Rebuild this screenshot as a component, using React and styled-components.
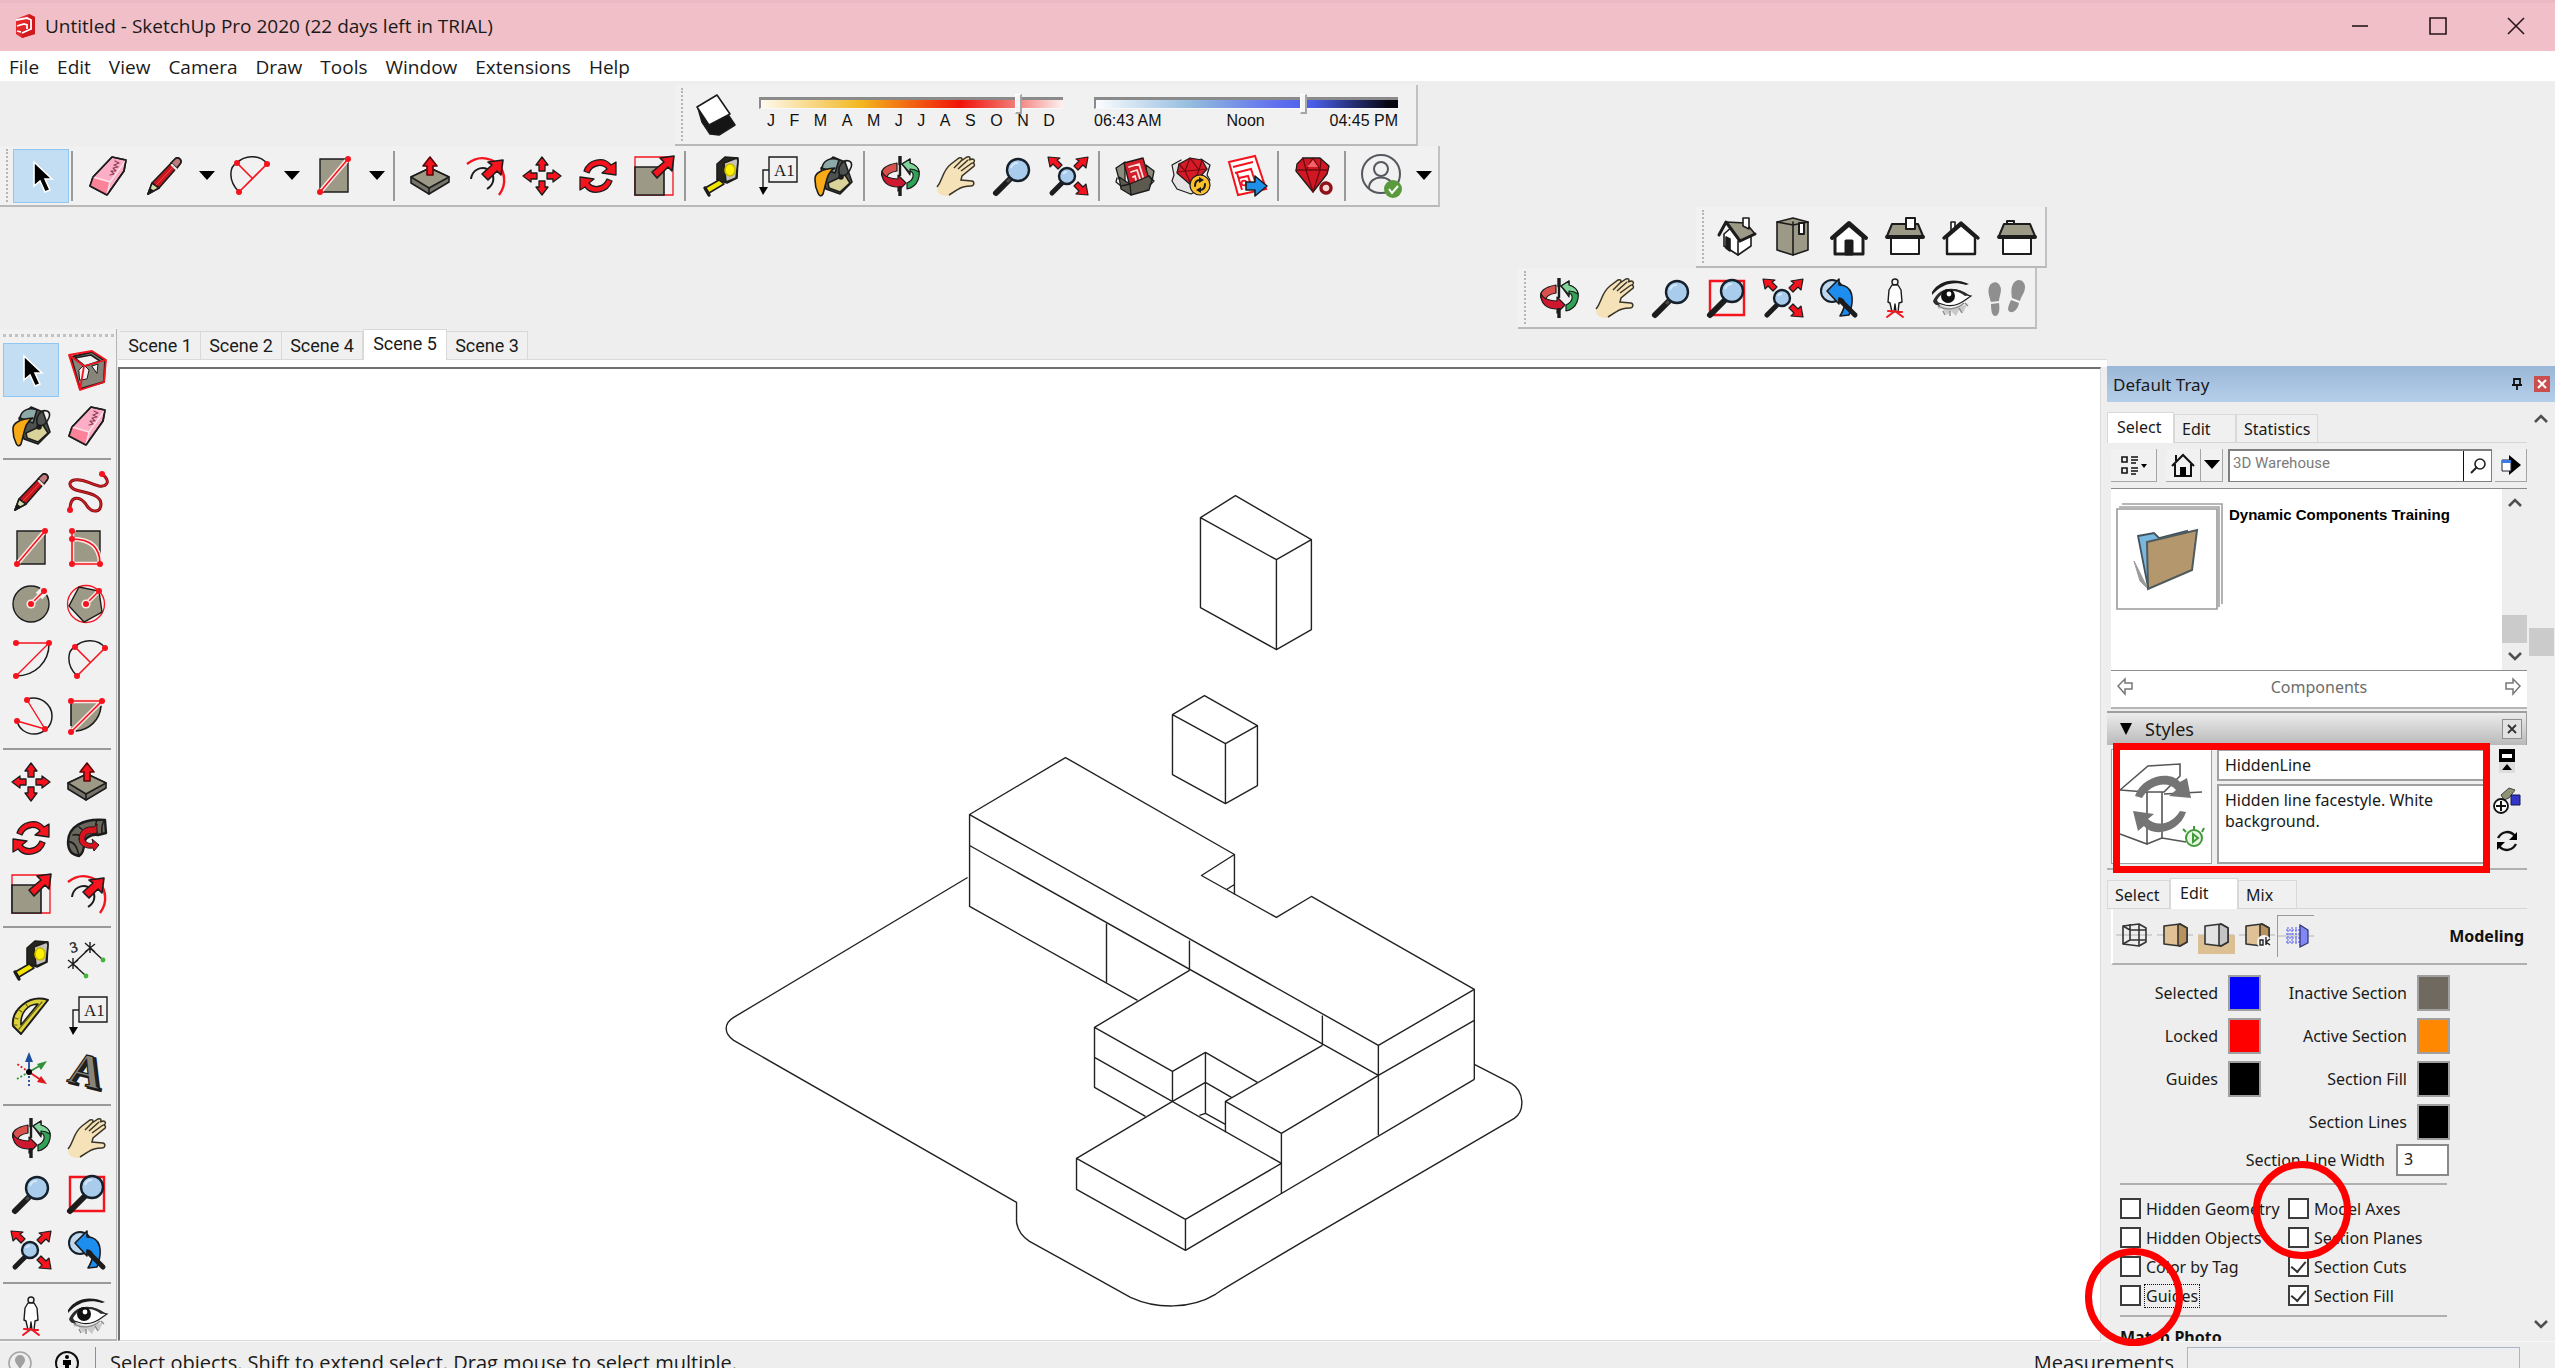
import React from 'react';
import styled, { createGlobalStyle, css } from 'styled-components';

const uiFont = '"Open Sans", "Noto Sans", sans-serif';
const trayFont = '"Noto Sans", "Open Sans", sans-serif';

const GlobalStyle = createGlobalStyle`
  * {
    box-sizing: border-box;
  }
  body {
    margin: 0;
    background: white;
    color: #1a1a1a;
    font-family: ${uiFont};
  }
  button, input, textarea {
    font-family: inherit;
    color: inherit;
    margin: 0;
  }
`;

/* ---------- icons ---------- */

const Svg = styled.svg`
  display: block;
  flex: none;
  width: ${(p) => p.$w || 40}px;
  height: ${(p) => p.$h || p.$w || 40}px;
  overflow: visible;
`;

const ink = { stroke: '#1c1c1c', strokeWidth: 1.6, strokeLinejoin: 'round', strokeLinecap: 'round' };
const red = '#f5131e';
const stone = '#9c9a86';

const Dot = ({ x, y }) => <circle cx={x} cy={y} r="3" fill={red} />;

const RedLine = ({ d }) => (
  <g fill="none">
    <path d={d} stroke="#fbe9e6" strokeWidth="4.5" />
    <path d={d} stroke={red} strokeWidth="1.6" />
  </g>
);

const Lens = ({ x = 26, y = 14, r = 11 }) => (
  <g>
    <circle cx={x} cy={y} r={r} fill="#a9cbec" stroke="#15202b" strokeWidth="2.4" />
    <path d={`M${x - r + 4} ${y - 2}a${r - 4} ${r - 4} 0 0 1 ${r - 4} ${-r + 6}`} fill="none" stroke="#d5e8fa" strokeWidth="2" />
  </g>
);

const arrowUp = 'M20 1l7 9h-4v9h-6v-9h-4z';

const icons = {
  cursor: <path d="M13 6v24l6-5 5 11 5-2-5-11h7z" fill="#000" stroke="#fff" strokeWidth="1.6" />,
  eraser: (
    <g {...ink}>
      <path d="M24 1l14 3-2 11-17 24L2 30l3-9z" fill="#fbaec5" />
      <path d="M2 30l3-9 17 5-3 13z" fill="#fb8298" stroke="none" />
      <path d="M5 21l17 5L38 4M22 26l-3 13" fill="none" stroke="#fde2ea" strokeWidth="1.4" />
      <path d="M24 1l14 3-2 11-17 24L2 30l3-9z" fill="none" />
      <path d="M27 5l4 2-5 2 4 2-5 1 3 3-5 0 3 3-4 1" fill="none" stroke="#8d3f5b" strokeWidth="1.2" />
    </g>
  ),
  pencil: (
    <g {...ink}>
      <path d="M4 38l4-11L31 3c3-3 8 1 5 5L15 32z" fill="#c7161d" />
      <path d="M4 38l4-11 7 5z" fill="#d8dcae" />
      <path d="M4 38l2-5 3 2z" fill="#000" />
      <path d="M27 7l6 5 3-4c3-4-2-8-5-5z" fill="#c27b7c" />
      <path d="M28 9l4 4" stroke="#e5e5e5" strokeWidth="2.4" />
      <path d="M12 29L29 11" stroke="#ef4b4b" strokeWidth="1" />
    </g>
  ),
  freehand: (
    <g>
      <path d="M35 2C45 10 39 15 32 14 22 12 17 6 7 8 0 10 3 16 9 18c9 3 25 4 25 14 0 8-8 10-14 2C14 24 3 22 3 38" fill="none" stroke="#7d0c10" strokeWidth="3" />
      <path d="M35 2C45 10 39 15 32 14 22 12 17 6 7 8 0 10 3 16 9 18c9 3 25 4 25 14 0 8-8 10-14 2C14 24 3 22 3 38" fill="none" stroke="#cf2026" strokeWidth="1.4" />
      <Dot x={35} y={2} />
      <Dot x={3} y={38} />
    </g>
  ),
  rect: (
    <g>
      <path d="M6 3h28v33H6z" fill={stone} stroke="#1c1c1c" strokeWidth="1.4" />
      <RedLine d="M6 36L34 3" />
      <Dot x={6} y={36} />
      <Dot x={34} y={3} />
    </g>
  ),
  rotRect: (
    <g>
      <path d="M6 3h27v33H6z" fill={stone} />
      <path d="M9 3h24v30" fill="none" stroke="#1c1c1c" strokeWidth="1.4" />
      <RedLine d="M5 3v33h28C33 18 22 11 5 11" />
      <Dot x={5} y={3} />
      <Dot x={5} y={11} />
      <Dot x={5} y={36} />
      <Dot x={33} y={36} />
    </g>
  ),
  circle: (
    <g>
      <circle cx="20" cy="20" r="18" fill={stone} stroke="#1c1c1c" strokeWidth="1.4" />
      <path d="M28 12L37 3" stroke="#f1f1f1" strokeWidth="9" />
      <RedLine d="M20 20L33 7" />
      <circle cx="20" cy="20" r="4.6" fill="#fbe9e6" />
      <Dot x={20} y={20} />
      <Dot x={33} y={7} />
    </g>
  ),
  polygon: (
    <g>
      <circle cx="19" cy="20" r="18.5" fill="none" stroke={red} strokeWidth="1.3" />
      <path d="M12 3l20 4 3 21-18 10L2 22z" fill={stone} stroke="#1c1c1c" strokeWidth="1.4" />
      <RedLine d="M19 20L32 7" />
      <circle cx="19" cy="20" r="4.6" fill="#fbe9e6" />
      <Dot x={19} y={20} />
      <Dot x={32} y={7} />
    </g>
  ),
  arc: (
    <g fill="none">
      <path d="M38 4c0 18-14 32-33 32" stroke="#1c1c1c" strokeWidth="1.5" />
      <path d="M5 3h33L5 36" stroke={red} strokeWidth="1.4" />
      <Dot x={5} y={3} />
      <Dot x={38} y={3} />
      <Dot x={5} y={36} />
    </g>
  ),
  arc2: (
    <g fill="none">
      <path d="M10 36C-2 24 1 10 8 7 16-2 32-1 38 8" stroke="#1c1c1c" strokeWidth="1.5" />
      <path d="M8 7l15 15M38 8L10 36" stroke={red} strokeWidth="1.6" />
      <Dot x={8} y={7} />
      <Dot x={38} y={8} />
      <Dot x={10} y={36} />
    </g>
  ),
  arc3: (
    <g fill="none">
      <path d="M16 3C30-1 41 9 41 20c0 11-9 18-18 18C15 38 8 33 6 25" stroke="#1c1c1c" strokeWidth="1.5" />
      <path d="M16 4l18 29L6 25" stroke={red} strokeWidth="1.4" />
      <Dot x={16} y={4} />
      <Dot x={34} y={33} />
      <Dot x={6} y={25} />
    </g>
  ),
  pie: (
    <g fill="none">
      <path d="M4 5h31c0 17-13 31-31 31z" fill={stone} />
      <path d="M4 8v22M34 10C33 24 22 34 9 35" stroke="#1c1c1c" strokeWidth="1.6" />
      <RedLine d="M4 5h31L4 36" />
      <Dot x={4} y={5} />
      <Dot x={35} y={5} />
      <Dot x={4} y={36} />
    </g>
  ),
  pushPull: (
    <g {...ink}>
      <path d="M1 21v6l18 11 20-12v-5L20 12z" fill="#77756a" />
      <path d="M1 21l19-9 19 9-20 11z" fill={stone} />
      <path d="M19 32v6" />
      <path d={arrowUp} fill={red} stroke="#5b0608" />
    </g>
  ),
  move: (
    <g {...ink} strokeWidth="1.3" fill={red}>
      {[0, 90, 180, 270].map((a) => (
        <path key={a} d="M20 1l6 8h-3v6h-6V9h-3z" transform={`rotate(${a} 20 20)`} />
      ))}
    </g>
  ),
  rotate: (
    <g {...ink} strokeWidth="1.3" fill={red}>
      <path d="M6 15C10 3 26 0 33 9l5-3v13l-14-2 5-4C24 7 14 9 11 17z" />
      <path d="M34 25c-4 12-20 15-27 6l-5 3V21l14 2-5 4c5 6 15 4 18-4z" />
    </g>
  ),
  followMe: (
    <g {...ink}>
      <path d="M1 24C1 9 16 0 38 2l1 13-8 2c-7-1-14 3-14 9 0 5-2 10-5 12C5 37 1 32 1 24z" fill="#6a685c" strokeWidth="2.4" />
      <path d="M6 17c4-1 7 0 9 3M12 9l6 5M30 2c-2 4-2 9 1 15M38 2c-2 2-4 6-3 14M1 24c5-1 9 4 11 14" fill="none" />
      <path d="M12 21C12 12 19 8 27 9l3-3v9l-6 1c-4-1-7 2-6 6 1 3 5 4 8 3l-1-4 7 6-5 6-1-3c-7 1-14-2-14-9z" fill="#d8131d" strokeWidth="1" />
    </g>
  ),
  scale: (
    <g>
      <path d="M1 1h38v38H1z" fill="none" stroke={red} strokeWidth="1.3" />
      <path d="M1 11h29v28H1z" fill={stone} stroke="#1c1c1c" strokeWidth="1.6" />
      <path d="M40 0l-2 15-4-4-11 11-5-6 12-10-4-4z" fill={red} {...ink} />
    </g>
  ),
  offset: (
    <g fill="none">
      <path d="M1 8C16-4 37 4 38 22c1 7-2 13-5 17" stroke={red} strokeWidth="2.4" />
      <path d="M5 23c1-9 10-13 16-10 9 5 8 15 0 20" stroke="#1c1c1c" strokeWidth="2" />
      <path d="M37 4l-2 15-4-4-9 9-6-6 10-9-4-3z" fill={red} {...ink} />
    </g>
  ),
  tape: (
    <g {...ink}>
      <path d="M16 8L24 1l13 1-1 20-10 5-10-3z" fill="#26261f" />
      <path d="M23 7l13-5 1 3-2 17-10 4z" fill="#c4c3bf" />
      <ellipse cx="29" cy="14" rx="5" ry="6" fill="#fdf100" stroke="#c9b800" />
      <path d="M18 24l5 4-15 9-4-5z" fill="#f2e500" />
      <path d="M4 32l4 7" strokeWidth="3.4" />
    </g>
  ),
  dimension: (
    <g stroke="#1c1c1c" strokeWidth="1.4" fill="none">
      <path d="M6 24L23 8l12 11M6 24l12 11M1 20l10 8M18 3l10 9M6 18v11M23 2v11M11 20L1 28M28 4l-10 8" />
      <circle cx="36" cy="20" r="2.4" fill="#3fb53a" stroke="none" />
      <circle cx="19" cy="36" r="2.4" fill="#3fb53a" stroke="none" />
      <text x="3" y="13" fontSize="15" fontFamily="Liberation Serif, serif" fill="#1c1c1c" strokeWidth="0.4" transform="rotate(-14 4 8)">3</text>
    </g>
  ),
  protractor: (
    <g {...ink}>
      <path d="M37 4C18-2 0 14 2 30l8 8z" fill="#ddd23a" strokeWidth="2" />
      <path d="M27 8C16 8 9 18 10 29z" fill="#f1f1f1" />
      <path d="M8 33L31 6M4 22l3 1M8 14l3 2M15 8l2 3M3 29h3" stroke="#6b6413" strokeWidth="1.2" />
    </g>
  ),
  text: (
    <g fill="none" stroke="#1c1c1c" strokeWidth="1.4">
      <path d="M12 1h28v25H12zM12 14H6v17" />
      <path d="M2 31h9l-5 8z" fill="#000" stroke="none" />
      <text x="17" y="20" fontSize="17" fontFamily="Liberation Serif, serif" fill="#1c1c1c" stroke="none">A1</text>
    </g>
  ),
  axes: (
    <g fill="none" strokeWidth="1.8">
      <path d="M18 20V7" stroke="#1b4f9c" />
      <path d="M14 10l4-10 4 10z" fill="#1b4f9c" />
      <path d="M18 20l12-7" stroke="#2f9236" />
      <path d="M36 9l-6 9-4-6z" fill="#2f9236" />
      <path d="M18 20l12 8" stroke="#e0161f" />
      <path d="M36 32l-10-2 4-6z" fill="#e0161f" />
      <path d="M18 20v14" stroke="#1b4f9c" strokeDasharray="2 2" />
      <path d="M18 20L6 27" stroke="#2f9236" strokeDasharray="2 2" />
      <path d="M18 20L6 12" stroke="#e0161f" strokeDasharray="2 2" />
      <circle cx="18" cy="20" r="3" fill="#000" />
    </g>
  ),
  text3d: (
    <g fontSize="46" fontFamily="Liberation Serif, serif" fontWeight="bold" transform="rotate(14 20 20)">
      <text x="5" y="35" fill="#2a2a25" stroke="#1c1c1c" strokeWidth="2">A</text>
      <text x="2" y="34" fill="#87857a" stroke="#1c1c1c" strokeWidth="1.2">A</text>
    </g>
  ),
  orbit: (
    <g {...ink} strokeWidth="1.2">
      <path d="M17 7C5 9 0 14 2 20l5 4c-1-6 4-8 10-9z" fill="#d9504d" />
      <path d="M22 8l8-5v4c9 3 11 9 8 17-2 5-6 8-11 9v-6c7-3 8-10 3-12v4z" fill="#2fa356" />
      <path d="M22 8l8-5v4c6 2 9 5 9 9-3-2-6-3-9-3v4z" fill="#7fd39b" />
      <path d="M2 15c1 6 10 8 16 8v-4l8 8-8 8v-4C8 31 1 26 2 15z" fill="#cf1730" />
      <path d="M20 0v9M20 30v10" strokeWidth="3.4" strokeLinecap="butt" />
      <path d="M20 8v12" strokeWidth="2.4" strokeLinecap="butt" />
    </g>
  ),
  hand: (
    <g>
      <path d="M1 33C7 24 6 15 15 8l8-6c3-1 4 1 2 3l6-4c3-1 4 1 2 3l3-1c3 0 3 3 1 4 2 1 2 3 0 4L26 20l-1 4 11 1c3 1 2 5-1 5-7 0-10 1-14 4l-8 6C6 40 2 39 1 33z" fill="#f6e2b8" />
      <path d="M1 31C7 24 6 15 15 8l8-6c3-1 4 1 2 3l6-4c3-1 4 1 2 3l3-1c3 0 3 3 1 4 2 1 2 3 0 4L26 20l-1 4 11 1c3 1 2 5-1 5-7 0-10 1-14 4l-8 5M18 12l8-8M22 13l10-9M25 15l11-8" fill="none" stroke="#3a3527" strokeWidth="1.5" />
    </g>
  ),
  zoom: (
    <g>
      <path d="M4 37l13-13" stroke="#1c1c1c" strokeWidth="6" strokeLinecap="round" />
      <path d="M15 26l5-5" stroke="#4a4a4a" strokeWidth="3" />
      <Lens />
    </g>
  ),
  zoomWindow: (
    <g>
      <path d="M3 3h34v34H3z" fill="none" stroke={red} strokeWidth="2.4" />
      <path d="M3 37l14-14" stroke="#1c1c1c" strokeWidth="6" strokeLinecap="round" />
      <Lens x={25} y={13} />
    </g>
  ),
  zoomExtents: (
    <g>
      <path d="M4 37l10-10" stroke="#1c1c1c" strokeWidth="5" strokeLinecap="round" />
      <Lens x={19} y={20} r={8} />
      <g fill={red} {...ink} strokeWidth="1.2">
        <path d="M40 1l-2 11-3-3-5 5-4-4 5-5-3-2z" />
        <path d="M0 1l2 10 3-3 5 5 4-4-5-5 3-2z" />
        <path d="M40 39l-2-11-3 3-5-5-4 4 5 5-3 3z" />
      </g>
    </g>
  ),
  previous: (
    <g>
      <circle cx="13" cy="13" r="11" fill="#bfd8ee" stroke="#15202b" strokeWidth="2" />
      <path d="M8 13L20 1v6c14 0 16 14 10 30l-9 1c5-8 7-17-1-18v6z" fill="#1d8df0" {...ink} />
      <path d="M22 23l14 14" stroke="#1c1c1c" strokeWidth="5" strokeLinecap="round" />
    </g>
  ),
  camera: (
    <g fill="none" {...ink} strokeWidth="1.4">
      <circle cx="20" cy="4" r="3" />
      <path d="M17 7h6l3 5 1 12-3 1-1 9h-2l-1-8-1 8h-2l-2-9-2-1 1-12z" fill="#fff" />
      <path d="M12 39l8-6 8 6M13 33l14 1" stroke={red} strokeWidth="2" />
    </g>
  ),
  eye: (
    <g>
      <path d="M6 24c6 6 18 9 30 2l-4 9-4-3-3 6-5-5-4 4-5-7-4 1z" fill="#c9c9c9" />
      <path d="M1 14C8 3 22-1 38 6l-3 1C22 3 11 6 1 17z" fill="#1c1c1c" />
      <path d="M4 24C8 10 24 8 36 17l4 1c-6 4-14 12-26 9z" fill="#fff" stroke="#1c1c1c" strokeWidth="1.2" />
      <path d="M2 23C8 9 24 7 38 17l-4 1C24 10 12 12 6 22l3 6c-3-1-6-1-7-5z" fill="#2d2d2d" />
      <circle cx="17" cy="18" r="7" fill="#111" />
      <circle cx="18" cy="16" r="2.4" fill="#fff" />
      <path d="M7 28c8 5 20 3 26-3M12 33l2 4M19 33l0 5M28 30l3 5M34 25l3 3" stroke="#888" strokeWidth="1.4" fill="none" />
    </g>
  ),
  walk: (
    <g fill="#8f8f8f">
      <path d="M3 7c4-5 10-3 11 4 0 5-2 8-2 12l-8 1C2 18 0 12 3 7z" />
      <path d="M4 26l8-1c1 7 0 13-4 13-3 0-4-5-4-12z" />
      <path d="M26 6c4-7 12-4 12 3 0 6-4 9-5 14l-8-3c-1-6-1-10 1-14z" />
      <path d="M24 22l8 3c-1 6-5 10-9 9-4-2-1-7 1-12z" />
    </g>
  ),
  component: (
    <g {...ink}>
      <path d="M4 7l21-5 13 9-1 21-24 7z" fill="#87857a" strokeWidth="2" />
      <path d="M8 8l16-3 9 6-15 5z" fill="#f1f1f1" />
      <path d="M12 20l5-5 5 5-2 9-7 1zM25 16l6-2-1 9z" fill="#f1f1f1" strokeWidth="1" />
      <path d="M2 5l23-4 14 9-22 6zM17 16l-4 24M2 5l11 35M39 10l-2 22-24 8" fill="none" stroke={red} strokeWidth="1.8" />
    </g>
  ),
  paint: (
    <g {...ink}>
      <path d="M8 12L20 1l12 5 7 20-12 12-14-5z" fill="#4f5350" />
      <path d="M9 12C10 4 18 1 26 4l-4 13z" fill="#8eaaa8" />
      <path d="M15 27l17-8 5 8-10 9-11-4z" fill="#d9d29a" />
      <path d="M27 20c-4-9 3-17 9-15 5 2 2 9-3 14" fill="none" />
      <path d="M2 24c-1-7 7-11 20-12-8 4-8 12-12 26-2 3-4 2-5-1-2-4-3-8-3-13z" fill="#f9ab17" />
      <circle cx="28" cy="21" r="2" fill="#1c1c1c" />
    </g>
  ),
  warehouse: (
    <g {...ink} strokeWidth="1.3">
      <path d="M10 6l-9 6 3 11 6 4zM31 9l8 6-2 10-5 2z" fill="#8d8b7b" />
      <path d="M9 7L28 2l6 21-19 8z" fill="#d2202a" />
      <path d="M14 11l10-3 4 13M16 16l6-2 3 9M18 21l2-1 1 4" stroke="#fde3e3" strokeWidth="1.8" fill="none" />
      <path d="M4 21l11 7 19-8 3 4-3 10-18 5L6 33z" fill="#5c5a4f" />
      <path d="M15 28l1 11M2 22l-1 4 5 4 9-2M34 20l5 5-4 4" fill="none" />
    </g>
  ),
  extWarehouse: (
    <g {...ink} strokeWidth="1.2">
      <path d="M10 4l-9 5 2 10-2 6 5 8 14 5 8-4M30 3l9 6-3 10 3 5" fill="#e4e4e4" />
      <path d="M8 8l11-6 12 2 5 9-15 17L6 17z" fill="#d61a26" />
      <path d="M6 16l30-3M14 15l7 15 7-16M8 8l6 7 5-13 9 12 3-10" fill="none" stroke="#6d0a10" />
      <circle cx="29" cy="29" r="10" fill="#fbc02b" />
      <path d="M24 30c0-5 3-6 5-6M34 28c0 5-3 6-5 6" fill="none" strokeWidth="2" />
      <path d="M28 21l5 3-5 3zM30 31l-5 3 5 3z" fill="#1c1c1c" stroke="none" />
    </g>
  ),
  layout: (
    <g>
      <path d="M2 6l26-6 11 33-28 6z" fill="#fff" stroke={red} strokeWidth="2" />
      <path d="M6 11l20-5M8 17l16-4 5 15M12 22l9-2 3 9M10 17l5 17" fill="none" stroke={red} strokeWidth="2" />
      <circle cx="17" cy="27" r="2.4" fill="none" stroke={red} strokeWidth="1.6" />
      <path d="M19 26h9v-6l12 10-12 10v-6h-9z" fill="#1e90e8" {...ink} />
    </g>
  ),
  ruby: (
    <g {...ink} strokeWidth="1.3">
      <path d="M9 2h17l9 8-2 8-14 18L2 15l1-7z" fill="#cf1824" />
      <path d="M2 14h32M12 14l7 22 7-22M9 2l3 12 7-12 7 12 1-11" fill="none" stroke="#6d0a10" />
      <path d="M19 4l5 7H13z" fill="#f5616a" stroke="none" />
      <circle cx="32" cy="32" r="5" fill="#f6d5d5" stroke="#8e1219" strokeWidth="3.4" strokeDasharray="3 1" />
    </g>
  ),
  user: (
    <g fill="none" stroke="#55585e" strokeWidth="2">
      <circle cx="20" cy="18" r="19" />
      <circle cx="20" cy="13" r="7" />
      <path d="M8 32c0-14 24-14 24 0" />
      <circle cx="32" cy="33" r="9" fill="#5a9a3c" stroke="none" />
      <path d="M28 33l3 4 6-7" stroke="#fff" />
    </g>
  ),
  isoView: (
    <g {...ink}>
      <path d="M7 17v12l14 9 13-9V15L17 8z" fill="#fff" />
      <path d="M9 20l4 2v12l-4-3z" fill="#1c1c1c" />
      <path d="M21 24v14" />
      <path d="M9 5l20 1 9 11-15 7z" fill={stone} />
      <path d="M2 18L9 5l14 19M38 17l-15 7" fill="none" strokeWidth="3" />
      <path d="M26 9V1h6v11z" fill="#fff" />
    </g>
  ),
  topView: (
    <g {...ink}>
      <path d="M4 5l16-4 15 4v28l-15 5-16-5z" fill={stone} />
      <path d="M20 5v33M4 5l16 3 15-3" fill="none" />
      <path d="M26 6h5v11h-5z" fill="#fff" strokeWidth="2" />
    </g>
  ),
  frontView: (
    <g {...ink} strokeWidth="3">
      <path d="M6 20v17h28V20L20 8z" fill="#fff" />
      <path d="M3 21L20 6l17 15" fill="none" strokeWidth="4" />
      <path d="M17 37V24h6v13z" fill="#1c1c1c" />
    </g>
  ),
  rightView: (
    <g {...ink} strokeWidth="2">
      <path d="M6 20h28v17H6z" fill="#fff" />
      <path d="M7 7h26l5 12H2z" fill={stone} />
      <path d="M2 20h36" strokeWidth="4" />
      <path d="M21 1h9v11h-9z" fill="#fff" />
    </g>
  ),
  backView: (
    <g {...ink} strokeWidth="2.4">
      <path d="M10 16V5h4v8" fill="#fff" strokeWidth="1.6" />
      <path d="M6 20v17h28V20L20 8z" fill="#fff" />
      <path d="M3 21L20 6l17 15" fill="none" strokeWidth="3.4" />
    </g>
  ),
  leftView: (
    <g {...ink} strokeWidth="2">
      <path d="M10 7V4h7v3" fill="#fff" />
      <path d="M6 20h28v17H6z" fill="#fff" />
      <path d="M7 7h26l5 12H2z" fill={stone} />
      <path d="M2 20h36" strokeWidth="4" />
    </g>
  ),
  shadow: (
    <g {...ink}>
      <path d="M2 13l4 14 8 12 9 1 16-10-6-9z" fill="#151515" />
      <path d="M1 12L21 0l13 19-21 11z" fill="#fff" />
    </g>
  ),
};

const ToolIcon = ({ name, size }) => (
  <Svg viewBox="0 0 40 40" $w={size} aria-hidden="true">
    {icons[name]}
  </Svg>
);

/* ---------- window chrome ---------- */

const Window = styled.div`
  display: flex;
  flex-direction: column;
  height: 100vh;
  padding-right: 5px;
  overflow: hidden;
`;

const TitleBar = styled.header`
  display: flex;
  align-items: center;
  flex: none;
  height: 51px;
  padding: 0 0 2px 14px;
  background: #f0bfc7;
  border-top: 3px solid #eab9c3;
`;

const Title = styled.h1`
  flex: 1;
  margin: 0 0 0 9px;
  font-size: 19px;
  font-weight: 400;
`;

const WindowButton = styled.button`
  display: flex;
  align-items: center;
  justify-content: center;
  width: 78px;
  height: 46px;
  padding: 0;
  border: 0;
  background: none;
`;

const MenuBar = styled.nav`
  display: flex;
  align-items: center;
  flex: none;
  height: 30px;
  gap: 18px;
  padding: 2px 0 0 9px;
  background: white;
`;

const MenuLink = styled.a`
  color: #1a1a1a;
  font-size: 19px;
  text-decoration: none;
`;

const Dock = styled.div`
  flex: none;
  padding-top: 4px;
  background: #eeeeee;
`;

const DockRow = styled.div`
  display: flex;
  padding-left: ${(p) => p.$indent || 0}px;
`;

const Toolbar = styled.div`
  display: flex;
  align-items: center;
  height: 61px;
  padding: 0 ${(p) => p.$end || 0}px 0 6px;
  background: #f1f1f1;
  border-right: 2px solid #c2c2c2;
  border-bottom: 2px solid #b9b9b9;
`;

const Grip = styled.div`
  align-self: stretch;
  width: 3px;
  margin: 3px 4px 3px 0;
  border-left: 2px dotted #b5b5b5;
`;

const ToolButton = styled.button`
  display: flex;
  align-items: center;
  justify-content: center;
  flex: none;
  width: 56px;
  height: 54px;
  padding: 0;
  border: 1px solid transparent;
  background: none;
  ${(p) =>
    p.$active &&
    css`
      background: #c3ddf2;
      border-color: #90c6f2;
    `}
`;

const DropButton = styled.button`
  display: flex;
  align-items: center;
  justify-content: center;
  flex: none;
  width: 29px;
  height: 54px;
  padding: 0;
  border: 0;
  background: none;
  &::after {
    content: '';
    border: 8px solid transparent;
    border-top: 9px solid black;
    border-bottom: 0;
  }
`;

const ToolSep = styled.div`
  width: 2px;
  height: 50px;
  margin: 0 7px 0 2px;
  background: #9a9a9a;
`;

const SunSlider = styled.div`
  display: flex;
  flex-direction: column;
  width: 304px;
  margin-left: 15px;
  margin-right: 16px;
  padding-bottom: 6px;
`;

const Range = styled.input`
  appearance: none;
  width: 100%;
  height: 18px;
  margin: 0;
  background: none;
  &::-webkit-slider-runnable-track {
    height: 12px;
    border-top: 3px solid #8a8a8a;
    border-left: 2px solid #8a8a8a;
    border-bottom: 1px solid #f8f8f8;
    background: ${(p) => p.$track};
  }
  &::-webkit-slider-thumb {
    appearance: none;
    width: 7px;
    height: 20px;
    margin-top: -6px;
    background: #f4f4f4;
    border: 1px solid #fff;
    border-right: 2px solid #a5a5a5;
    border-bottom: 2px solid #a5a5a5;
  }
`;

const SliderLabels = styled.div`
  display: flex;
  justify-content: space-between;
  padding: 0 ${(p) => p.$pad || 0}px;
  font: 16px/18px "Liberation Sans", sans-serif;
  color: #111;
`;

/* ---------- work area ---------- */

const Work = styled.div`
  display: flex;
  flex: 1;
  min-height: 0;
  background: #eeeeee;
`;

const ToolPalette = styled.div`
  flex: none;
  width: 117px;
  padding: 5px 0 0 3px;
  overflow: hidden;
  background: #f1f1f1;
  border-right: 1px solid #b5b5b5;
  border-bottom: 2px solid #b5b5b5;
`;

const PaletteGrip = styled.div`
  height: 9px;
  margin-right: 2px;
  border-top: 3px dotted #c2c2c2;
`;

const PaletteGroup = styled.div`
  display: grid;
  grid-template-columns: 56px 56px;
  grid-auto-rows: 56px;
  & + & {
    margin-top: 3px;
    padding-top: 5px;
    border-top: 2px solid #9a9a9a;
    margin-right: 5px;
  }
`;

const Center = styled.main`
  display: flex;
  flex-direction: column;
  flex: 1;
  min-width: 0;
  padding-left: 1px;
`;

const SceneTabs = styled.div`
  display: flex;
  align-items: flex-end;
  flex: none;
  height: 31px;
  padding-left: 2px;
  border-bottom: 1px solid #dadada;
`;

const SceneTab = styled.button`
  height: ${(p) => (p.$active ? 31 : 28)}px;
  margin-bottom: ${(p) => (p.$active ? -1 : 0)}px;
  padding: ${(p) => (p.$active ? '0 6px 3px' : '0 7px')};
  border: 1px solid #d9d9d9;
  border-left-width: ${(p) => (p.$active ? 1 : 0)}px;
  border-bottom: 0;
  background: ${(p) => (p.$active ? 'white' : '#f0f0f0')};
  font-family: Roboto, sans-serif;
  font-size: 18px;
  min-width: ${(p) => (p.$active ? 84 : 81)}px;
`;

const TabGap = styled.div`
  flex: none;
  height: 7px;
  background: white;
`;

const Viewport = styled.div`
  flex: 1;
  min-height: 0;
  margin-right: 6px;
  background: white;
  border-top: 2px solid #6f6f6f;
  border-left: 2px solid #6f6f6f;
  border-right: 1px solid #dadada;
  border-bottom: 1px solid #dadada;
`;

const Model = styled.svg`
  display: block;
  width: 100%;
  height: 100%;
`;

/* ---------- tray ---------- */

const Tray = styled.aside`
  display: flex;
  flex-direction: column;
  flex: none;
  width: 448px;
  margin-top: 37px;
  font-family: ${trayFont};
  font-size: 16px;
`;

const TrayHeader = styled.div`
  display: flex;
  align-items: center;
  flex: none;
  height: 36px;
  padding: 0 5px 0 6px;
  gap: 10px;
  background: linear-gradient(#9bb7d7, #b5cfea);
`;

const TrayTitle = styled.h2`
  flex: 1;
  margin: 0;
  font-size: 17px;
  font-weight: 400;
`;

const PlainButton = styled.button`
  display: flex;
  align-items: center;
  justify-content: center;
  flex: none;
  width: ${(p) => p.$w || 20}px;
  height: ${(p) => p.$h || 20}px;
  padding: 0;
  border: 0;
  background: none;
`;

const CloseButton = styled(PlainButton)`
  width: 16px;
  height: 16px;
  background: #c94f4f;
  color: white;
`;

const TrayBody = styled.div`
  display: flex;
  flex: 1;
  min-height: 0;
`;

const TrayContent = styled.div`
  display: flex;
  flex-direction: column;
  flex: 1;
  min-width: 0;
`;

const ScrollBar = styled.div`
  display: flex;
  flex-direction: column;
  align-items: center;
  flex: none;
  width: ${(p) => p.$w}px;
  padding: ${(p) => p.$pad}px 0;
  background: #eeeeee;
`;

const ScrollThumb = styled.div`
  width: 25px;
  height: 28px;
  margin-top: ${(p) => p.$top}px;
  margin-bottom: auto;
  background: #cbcbcb;
`;

const Tabs = styled.div`
  display: flex;
  align-items: flex-end;
  flex: none;
  height: 31px;
  margin-top: ${(p) => p.$top}px;
  border-bottom: 1px solid #d5d5d5;
`;

const Tab = styled.button`
  width: ${(p) => p.$w}px;
  height: ${(p) => (p.$active ? 31 : 28)}px;
  margin-bottom: ${(p) => (p.$active ? -1 : 0)}px;
  padding: ${(p) => (p.$active ? '0 0 3px 9px' : '0 0 0 7px')};
  border: 1px solid #d9d9d9;
  border-bottom: 0;
  background: ${(p) => (p.$active ? 'white' : '#f0f0f0')};
  font-size: 16px;
  text-align: left;
`;

const SearchRow = styled.div`
  display: flex;
  align-items: center;
  flex: none;
  height: 46px;
  margin-left: 4px;
  border-bottom: 1px solid #8c8c8c;
`;

const RaisedButton = styled.button`
  display: flex;
  align-items: center;
  justify-content: center;
  flex: none;
  width: ${(p) => p.$w}px;
  height: 33px;
  margin-left: ${(p) => p.$gap || 0}px;
  padding: 0;
  border: 0;
  border-right: 1px solid #a5a5a5;
  border-bottom: 1px solid #a5a5a5;
  background: #f1f1f1;
`;

const SearchBox = styled.div`
  display: flex;
  flex: 1;
  height: 33px;
  margin-left: 5px;
  border: 2px solid #7f7f7f;
  border-bottom-width: 1px;
  border-right-width: 1px;
  background: white;
`;

const SearchInput = styled.input`
  flex: 1;
  min-width: 0;
  padding: 0 0 7px 3px;
  border: 0;
  background: none;
  font-family: Roboto, sans-serif;
  font-size: 15px;
  &::placeholder {
    color: #7b7b7b;
    opacity: 1;
  }
`;

const SearchButton = styled(PlainButton)`
  width: 28px;
  height: 30px;
  border-left: 1px solid #111;
`;

const ComponentList = styled.div`
  display: flex;
  flex: none;
  height: 182px;
  margin-left: 4px;
  background: white;
  border-bottom: 1px solid #8c8c8c;
`;

const ComponentItem = styled.div`
  display: flex;
  flex: 1;
  gap: 6px;
  padding: 14px 0 0 5px;
`;

const ComponentName = styled.strong`
  padding-top: 3px;
  font: bold 15px/18px "Liberation Sans", sans-serif;
  color: black;
`;

const NavRow = styled.div`
  display: flex;
  align-items: center;
  justify-content: space-between;
  flex: none;
  height: 38px;
  margin: 0 0 2px 4px;
  padding: 0 6px 5px;
  background: white;
  color: #6d6d6d;
  border-bottom: 2px solid #b5b5b5;
`;

const PanelHeader = styled.div`
  display: flex;
  align-items: center;
  flex: none;
  height: 34px;
  padding: 0 4px 0 13px;
  gap: 13px;
  background: linear-gradient(#ececec, #b9b9b9);
  border-top: 2px solid #9f9f9f;
  border-right: 1px solid #9f9f9f;
  &::before {
    content: '';
    border: 6px solid transparent;
    border-top: 12px solid black;
    border-bottom: 0;
  }
`;

const PanelTitle = styled.h3`
  flex: 1;
  margin: 0;
  font-size: 18px;
  font-weight: 400;
`;

const PanelClose = styled(PlainButton)`
  border: 1px solid #8f8f8f;
  background: #e2e2e2;
`;

const StyleBlock = styled.section`
  position: relative;
  display: flex;
  flex: none;
  height: 125px;
  padding: 4px 5px 4px 4px;
  border-bottom: 2px solid #b0b0b0;
`;

const StyleThumb = styled.div`
  width: 101px;
  padding: 6px 0 0 8px;
  background: #fff;
  border: 1px solid #a0a0a0;
`;

const StyleFields = styled.div`
  display: flex;
  flex-direction: column;
  flex: 1;
  gap: 3px;
  margin-left: 5px;
`;

const fieldStyles = css`
  width: 100%;
  padding: 0 6px;
  border: 2px solid #a0a0a0;
  border-right: 0;
  background: white;
  font-size: 16px;
`;

const NameInput = styled.input`
  ${fieldStyles}
  height: 32px;
`;

const DescriptionInput = styled.textarea`
  ${fieldStyles}
  flex: 1;
  padding-top: 4px;
  line-height: 21px;
  resize: none;
  overflow: hidden;
`;

const StyleActions = styled.div`
  display: flex;
  flex-direction: column;
  align-items: center;
  width: 30px;
  margin-left: 8px;
  padding-top: 2px;
  gap: 12px;
`;

const RedFrame = styled.div`
  position: absolute;
  top: -2px;
  left: 6px;
  right: 37px;
  bottom: -5px;
  border: 7px solid #fe0000;
  pointer-events: none;
`;

const EditRow = styled.div`
  display: flex;
  align-items: center;
  flex: none;
  height: 56px;
  margin-left: 4px;
  padding: 0 3px 0 0;
  border-bottom: 2px solid #b0b0b0;
  border-left: 2px solid white;
`;

const EditButton = styled.button`
  display: flex;
  align-items: center;
  justify-content: center;
  width: ${(p) => (p.$active ? 37 : 41)}px;
  height: 42px;
  padding: 0;
  border: 0;
  background: none;
  ${(p) =>
    p.$active &&
    css`
      border-top: 1px solid #9a9a9a;
      border-left: 1px solid #9a9a9a;
    `}
`;

const SectionName = styled.strong`
  margin-left: auto;
  color: #111;
`;

const Swatches = styled.div`
  display: grid;
  grid-template-columns: 98px 33px 136px 33px;
  grid-auto-rows: 36px;
  gap: 7px 10px;
  flex: none;
  align-items: center;
  padding: 10px 0 4px 13px;
  justify-items: end;
`;

const SwatchLabel = styled.label`
  grid-column: ${(p) => p.$col};
  white-space: nowrap;
`;

const Swatch = styled.button`
  grid-column: ${(p) => p.$col};
  width: 33px;
  height: 36px;
  padding: 0;
  border: 2px solid #a0a0a0;
  background: ${(p) => p.$color};
`;

const LineWidthRow = styled.div`
  display: flex;
  align-items: center;
  justify-content: flex-end;
  flex: none;
  gap: 11px;
  width: 342px;
  height: 32px;
`;

const LineWidthInput = styled.input`
  width: 53px;
  height: 32px;
  padding: 0 6px 3px;
  border: 2px solid #8a8a8a;
  background: white;
  font-size: 16px;
`;

const CheckGrid = styled.div`
  display: grid;
  grid-template-columns: 168px 160px;
  grid-auto-rows: 29px;
  flex: none;
  margin: 7px 80px 0 13px;
  padding: 9px 0 5px;
  border: 2px solid #b0b0b0;
  border-width: 2px 0;
`;

const CheckLabel = styled.label`
  position: relative;
  display: flex;
  align-items: center;
  gap: 3px;
  white-space: nowrap;
`;

const CheckText = styled.span`
  padding: 0 1px;
  border: 1px ${(p) => (p.$focus ? 'dotted #111' : 'solid transparent')};
  line-height: 22px;
`;

const CheckBox = styled.input`
  appearance: none;
  display: flex;
  justify-content: center;
  width: 21px;
  height: 21px;
  border: 2px solid #3c3c3c;
  background: white;
  &:checked::after {
    content: '';
    width: 7px;
    height: 12px;
    border: 2px solid #333;
    border-width: 0 2px 2px 0;
    transform: rotate(40deg);
  }
`;

const Ring = styled.span`
  position: absolute;
  z-index: 2;
  top: -33px;
  left: -35px;
  width: 98px;
  height: 98px;
  border: 7px solid #fe0000;
  border-radius: 50%;
  pointer-events: none;
`;

const Clipped = styled.div`
  flex: 1;
  min-height: 0;
  overflow: hidden;
  padding: 8px 0 0 13px;
  line-height: 24px;
  color: #111;
`;

/* ---------- status bar ---------- */

const StatusBar = styled.footer`
  display: flex;
  align-items: flex-start;
  flex: none;
  height: 27px;
  padding: 5px 35px 0 8px;
  background: #eeeeee;
  border-top: 1px solid #f8f8f8;
  font-size: 20px;
  line-height: 32px;
  overflow: hidden;
`;

const StatusIcons = styled.div`
  display: flex;
  gap: 23px;
  padding: 4px 16px 0 0;
  border-right: 1px solid #8f8f8f;
  margin-right: 14px;
`;

const StatusText = styled.p`
  flex: 1;
  margin: 0;
`;

const MeasureInput = styled.input`
  width: 333px;
  height: 36px;
  margin-left: 13px;
  border: 1px solid #a9b5c6;
  background: #eeeeee;
`;

const Chevron = ({ down }) => (
  <Svg viewBox="0 0 14 10" $w={14} $h={10} aria-hidden="true">
    <path d={down ? 'M1 2l6 6 6-6' : 'M1 8l6-6 6 6'} fill="none" stroke="#505050" strokeWidth="2.6" />
  </Svg>
);

const menus = ['File', 'Edit', 'View', 'Camera', 'Draw', 'Tools', 'Window', 'Extensions', 'Help'];

const mainTools = [
  'cursor', '|', 'eraser', 'pencil', 'v', 'arc2', 'v', 'rect', 'v', '|',
  'pushPull', 'offset', 'move', 'rotate', 'scale', '|',
  'tape', 'text', 'paint', '|',
  'orbit', 'hand', 'zoom', 'zoomExtents', '|',
  'warehouse', 'extWarehouse', 'layout', '|', 'ruby', '|', 'user', 'v',
];
const viewTools = ['isoView', 'topView', 'frontView', 'rightView', 'backView', 'leftView'];
const cameraTools = ['orbit', 'hand', 'zoom', 'zoomWindow', 'zoomExtents', 'previous', 'camera', 'eye', 'walk'];

const palette = [
  ['cursor', 'component', 'paint', 'eraser'],
  ['pencil', 'freehand', 'rect', 'rotRect', 'circle', 'polygon', 'arc', 'arc2', 'arc3', 'pie'],
  ['move', 'pushPull', 'rotate', 'followMe', 'scale', 'offset'],
  ['tape', 'dimension', 'protractor', 'text', 'axes', 'text3d'],
  ['orbit', 'hand', 'zoom', 'zoomWindow', 'zoomExtents', 'previous'],
  ['camera', 'eye'],
];

const scenes = ['Scene 1', 'Scene 2', 'Scene 4', 'Scene 5', 'Scene 3'];

const swatches = [
  ['Selected', '#0000fe', 1],
  ['Inactive Section', '#6f695f', 3],
  ['Locked', '#fe0000', 1],
  ['Active Section', '#ff8800', 3],
  ['Guides', '#000', 1],
  ['Section Fill', '#000', 3],
  ['Section Lines', '#000', 3],
];

const checks = [
  { label: 'Hidden Geometry' },
  { label: 'Model Axes', ring: true },
  { label: 'Hidden Objects' },
  { label: 'Section Planes' },
  { label: 'Color by Tag' },
  { label: 'Section Cuts', on: true },
  { label: 'Guides', ring: true, focus: true },
  { label: 'Section Fill', on: true },
];

const modelLines = [
  // upper box
  'M1235 495L1200 517L1276 559L1311 539zM1200 517V607L1276 649L1311 629V539M1276 559V649',
  // lower box
  'M1204 695L1172 714L1225 743L1257 725zM1172 714V774L1225 803L1257 785V725M1225 743V803',
  // long wing
  'M969 814L1065 757L1234 854L1201 875L1276 917L1311 896L1474 989L1378 1045z',
  'M1234 854V894M1226 889L1234 884',
  'M969 814V906L1137 1000M969 845L1378 1075L1474 1020M1474 989V1079M1378 1045V1135',
  'M1106 923V982M1189 940V970M1322 1015V1045',
  // middle wing
  'M1189 970L1094 1027L1172 1071L1205 1052L1257 1082M1094 1027V1087L1145 1116M1094 1057L1281 1163',
  'M1322 1045L1225 1101L1281 1133L1378 1075M1225 1101V1132M1281 1133V1193',
  'M1172 1071V1101L1205 1082L1231 1097M1205 1052V1113M1199 1115L1205 1113L1225 1124',
  // front block
  'M1172 1101L1076 1158L1185 1219L1281 1163M1076 1158V1189L1185 1250V1219M1185 1250L1474 1079',
  // site
  'M967 877L733 1017C723 1023 723 1033 733 1040L1016 1202V1222Q1018 1234 1029 1241L1130 1297C1156 1309 1190 1309 1215 1294L1224 1288L1303 1241L1514 1118C1525 1110 1524 1091 1511 1083L1474 1064',
];

const Toolset = ({ tools }) =>
  tools.map((t, i) => {
    if (t === '|') return <ToolSep key={i} />;
    if (t === 'v') return <DropButton key={i} aria-label="More" />;
    return (
      <ToolButton key={i} $active={t === 'cursor'} aria-label={t}>
        <ToolIcon name={t} />
      </ToolButton>
    );
  });

const Cube = ({ kind }) => (
  <Svg viewBox="0 0 36 32" $w={36} $h={32} aria-hidden="true">
    <path d="M0 15h36" stroke="#b5b5b5" strokeWidth="1" />
    {kind === 'back' && <path d="M0 15h37v19H0z" fill="#dcbf92" />}
    {kind !== 'mark' && (
      <g stroke="#333" strokeWidth="1.6" strokeLinejoin="round">
        <path d="M7 6l16-2 7 4v14l-7 4-16-2z" fill={kind === 'edge' ? 'none' : kind === 'back' ? '#e3e3e3' : '#dfc195'} />
        {kind === 'edge' && <path d="M23 4v22M7 6l7 4h16M14 10v10l-7 4M14 20h16M14 4v16" fill="none" />}
        {kind !== 'edge' && <path d="M21 5l2-1 7 4v14l-7 4-2-1z" fill={kind === 'back' ? '#c4c4c4' : '#b8925c'} />}
      </g>
    )}
    {kind === 'water' && (
      <g>
        <circle cx="25" cy="22" r="7" fill="#f4f4f4" />
        <path d="M21 20v5h3v-5zM27 17v8M31 19l-4 3 4 3" stroke="#222" strokeWidth="1.4" fill="none" />
      </g>
    )}
    {kind === 'mark' && (
      <g>
        <path d="M8 9h16M8 13h16M8 17h16M8 21h16M10 6v17M14 6v17M18 6v18M22 5v20" stroke="#7d83f2" strokeWidth="1.4" strokeDasharray="2 1" />
        <path d="M22 4l8 5v13l-8 4z" fill="#8188f5" stroke="#2d2f6b" strokeWidth="1.2" />
      </g>
    )}
  </Svg>
);

const App = () => (
  <Window>
    <GlobalStyle />
    <TitleBar>
      <Svg viewBox="0 0 22 24" $w={22} $h={24} aria-hidden="true">
        <path d="M2 5L15 0l6 3v17L8 24l-6-4z" fill="#e3262a" />
        <path d="M15 0l6 3v17L8 24v-7l7-3z" fill="#d0191f" />
        <path d="M2 6l11-2 4 2v9l-9 4M3 12l7-2 3 1v4M3 17l4 1" fill="none" stroke="#fff" strokeWidth="1.8" />
      </Svg>
      <Title>Untitled - SketchUp Pro 2020 (22 days left in TRIAL)</Title>
      <WindowButton aria-label="Minimize">
        <Svg viewBox="0 0 16 16" $w={16}><path d="M0 8h16" stroke="#2a1519" strokeWidth="1.6" /></Svg>
      </WindowButton>
      <WindowButton aria-label="Maximize">
        <Svg viewBox="0 0 16 16" $w={16}><path d="M0 0h16v16H0z" fill="none" stroke="#2a1519" strokeWidth="1.6" /></Svg>
      </WindowButton>
      <WindowButton aria-label="Close">
        <Svg viewBox="0 0 16 16" $w={16}><path d="M0 0l16 16M16 0L0 16" stroke="#2a1519" strokeWidth="1.6" /></Svg>
      </WindowButton>
    </TitleBar>

    <MenuBar>
      {menus.map((m) => (
        <MenuLink key={m} href="#">{m}</MenuLink>
      ))}
    </MenuBar>

    <Dock>
      <DockRow $indent={675}>
        <Toolbar $end={2}>
          <Grip />
          <ToolButton aria-label="Shadows">
            <ToolIcon name="shadow" />
          </ToolButton>
          <SunSlider>
            <Range type="range" min="0" max="100" defaultValue="86" aria-label="Date" $track="linear-gradient(90deg, #fdfaf0, #f3b71f 33%, #f01408 66%, #f27a77 84%, #fdf1f0)" />
            <SliderLabels $pad={8}>
              {'JFMAMJJASOND'.split('').map((m, i) => (
                <span key={i}>{m}</span>
              ))}
            </SliderLabels>
          </SunSlider>
          <SunSlider>
            <Range type="range" min="0" max="100" defaultValue="69" aria-label="Time" $track="linear-gradient(90deg, #fbfdff, #8fb9de 33%, #6373ee 58%, #4a5de8 72%, #05060f 97%)" />
            <SliderLabels>
              <span>06:43 AM</span>
              <span>Noon</span>
              <span>04:45 PM</span>
            </SliderLabels>
          </SunSlider>
        </Toolbar>
      </DockRow>
      <DockRow>
        <Toolbar>
          <Grip />
          <Toolset tools={mainTools} />
        </Toolbar>
      </DockRow>
      <DockRow $indent={1696}>
        <Toolbar>
          <Grip />
          <Toolset tools={viewTools} />
        </Toolbar>
      </DockRow>
      <DockRow $indent={1518}>
        <Toolbar>
          <Grip />
          <Toolset tools={cameraTools} />
        </Toolbar>
      </DockRow>
    </Dock>

    <Work>
      <ToolPalette>
        <PaletteGrip />
        {palette.map((group, i) => (
          <PaletteGroup key={i}>
            <Toolset tools={group} />
          </PaletteGroup>
        ))}
      </ToolPalette>

      <Center>
        <SceneTabs>
          {scenes.map((s) => (
            <SceneTab key={s} $active={s === 'Scene 5'}>{s}</SceneTab>
          ))}
        </SceneTabs>
        <TabGap />
        <Viewport>
          <Model viewBox="119 369 1981 970" role="img" aria-label="Model">
            <g fill="none" stroke="#222" strokeWidth="1.4" strokeLinejoin="round">
              {modelLines.map((d) => (
                <path key={d} d={d} />
              ))}
            </g>
          </Model>
        </Viewport>
      </Center>

      <Tray>
        <TrayHeader>
          <TrayTitle>Default Tray</TrayTitle>
          <PlainButton $w={14} aria-label="Pin">
            <Svg viewBox="0 0 10 12" $w={10} $h={12}>
              <path d="M2 0v7M8 0v7M2 1h6M0 7h10M5 7v5" stroke="#111" strokeWidth="1.8" fill="none" />
            </Svg>
          </PlainButton>
          <CloseButton aria-label="Close tray">
            <Svg viewBox="0 0 8 8" $w={8}><path d="M0 0l8 8M8 0L0 8" stroke="#fff" strokeWidth="2" /></Svg>
          </CloseButton>
        </TrayHeader>

        <TrayBody>
          <TrayContent>
            <Tabs $top={10}>
              <Tab $w={67} $active>Select</Tab>
              <Tab $w={62}>Edit</Tab>
              <Tab $w={82}>Statistics</Tab>
            </Tabs>
            <SearchRow>
              <RaisedButton $w={46} aria-label="View options">
                <Svg viewBox="0 0 26 18" $w={26} $h={18}>
                  <path d="M1 1h5v5H1zM1 12h5v5H1zM10 1h7M10 4h7M10 7h5M10 12h7M10 15h7M10 18h5" fill="none" stroke="#111" strokeWidth="1.6" />
                  <path d="M20 8h6l-3 4z" />
                </Svg>
              </RaisedButton>
              <RaisedButton $w={35} $gap={9} aria-label="In model">
                <Svg viewBox="0 0 24 24" $w={24}>
                  <path d="M4 11v12h16V11M1 13L12 2l11 11M5 8V2" fill="none" stroke="#111" strokeWidth="2" />
                  <path d="M9 14h6v9H9z" />
                </Svg>
              </RaisedButton>
              <RaisedButton $w={22} aria-label="Navigation">
                <Svg viewBox="0 0 16 10" $w={16} $h={10}><path d="M0 0h16L8 9z" /></Svg>
              </RaisedButton>
              <SearchBox>
                <SearchInput placeholder="3D Warehouse" aria-label="Search 3D Warehouse" />
                <SearchButton aria-label="Search">
                  <Svg viewBox="0 0 16 16" $w={16}>
                    <path d="M1 15l6-6" stroke="#222" strokeWidth="2" />
                    <circle cx="10" cy="6" r="5" fill="none" stroke="#222" strokeWidth="1.6" />
                  </Svg>
                </SearchButton>
              </SearchBox>
              <RaisedButton $w={32} $gap={3} aria-label="Details">
                <Svg viewBox="0 0 20 20" $w={20}>
                  <path d="M8 0l12 10L8 20z" />
                  <path d="M1 5h9v11H1z" fill="#fff" stroke="#223" />
                  <path d="M1 5h9v3H1z" fill="#3b7be0" />
                </Svg>
              </RaisedButton>
            </SearchRow>
            <ComponentList>
              <ComponentItem>
                <Svg viewBox="0 0 107 107" $w={107}>
                  <path d="M6 1h100v100M3 4h100v100" fill="none" stroke="#a0a0a0" strokeWidth="1.6" />
                  <path d="M1 6h100v100H1z" fill="#fff" stroke="#9a9a9a" strokeWidth="1.6" />
                  <path d="M18 58l14 28-8-8z" fill="#9a9a9a" stroke="#9a9a9a" />
                  <path d="M22 33l16-3 5 5 28-7v20L32 84z" fill="#79b7de" stroke="#42535e" strokeWidth="1.8" />
                  <path d="M31 39l50-12-5 40-44 19z" fill="#b5976d" stroke="#4f5a5c" strokeWidth="2" />
                </Svg>
                <ComponentName>Dynamic Components Training</ComponentName>
              </ComponentItem>
              <ScrollBar $w={25} $pad={9}>
                <Chevron />
                <ScrollThumb $top={107} />
                <Chevron down />
              </ScrollBar>
            </ComponentList>
            <NavRow>
              <Svg viewBox="0 0 17 17" $w={17}><path d="M1 8l7-7v4h7v6H8v5z" fill="none" stroke="#777" strokeWidth="1.5" /></Svg>
              <span>Components</span>
              <Svg viewBox="0 0 17 17" $w={17}><path d="M16 8L9 1v4H2v6h7v5z" fill="none" stroke="#777" strokeWidth="1.5" /></Svg>
            </NavRow>
            <PanelHeader>
              <PanelTitle>Styles</PanelTitle>
              <PanelClose aria-label="Close styles">
                <Svg viewBox="0 0 8 8" $w={8}><path d="M0 0l8 8M8 0L0 8" stroke="#333" strokeWidth="1.8" /></Svg>
              </PanelClose>
            </PanelHeader>
            <StyleBlock>
              <StyleThumb>
                <Svg viewBox="0 0 86 100" $w={86} $h={100}>
                  <path d="M0 34L28 10l32-2v12L44 36H26L0 34M27 36v52L0 78M42 36v46l-15 6M44 38l38-2M42 82l24 4" fill="none" stroke="#555" strokeWidth="1.6" />
                  <path d="M15 40C22 20 50 14 60 26l7-4 4 20-22-2 7-6C48 24 30 28 22 42z" fill="#747474" />
                  <path d="M66 56C60 76 34 82 24 70l-6 5-5-20 21 3-6 5c10 9 25 4 32-8z" fill="#747474" />
                  <circle cx="74" cy="82" r="8" fill="#e9f6e5" stroke="#3f9a3a" strokeWidth="2" />
                  <path d="M73 78v8l5-4zM74 74v-4M66 76l-3-3M82 76l2-4" fill="none" stroke="#3f9a3a" strokeWidth="2" />
                </Svg>
              </StyleThumb>
              <StyleFields>
                <NameInput defaultValue="HiddenLine" aria-label="Style name" />
                <DescriptionInput defaultValue="Hidden line facestyle. White background." aria-label="Style description" />
              </StyleFields>
              <StyleActions>
                <PlainButton $w={28} $h={20} aria-label="Show secondary pane">
                  <Svg viewBox="0 0 16 24" $w={16} $h={24}>
                    <path d="M0 0h16v24H0z" fill="#ddd" />
                    <path d="M0 0h16v13H0z" />
                    <path d="M3 5h10v4H3z" fill="#fff" />
                    <path d="M3 21l5-6 5 6z" />
                  </Svg>
                </PlainButton>
                <PlainButton $w={28} $h={36} aria-label="Create style">
                  <Svg viewBox="0 0 28 28" $w={28}>
                    <path d="M8 8l8-7 6 2-6 8-5 2z" fill="#8f9272" stroke="#444" />
                    <path d="M18 8h9v10h-9z" fill="#3037c6" stroke="#15174f" />
                    <circle cx="8" cy="19" r="7" fill="#fff" stroke="#111" strokeWidth="1.8" />
                    <path d="M8 14v10M3 19h10" stroke="#111" strokeWidth="2" />
                  </Svg>
                </PlainButton>
                <PlainButton $w={28} $h={20} aria-label="Update style">
                  <Svg viewBox="0 0 22 22" $w={22}>
                    <path d="M2 8c4-7 12-8 17-2M20 14c-4 7-12 8-17 2" fill="none" stroke="#111" strokeWidth="2.4" />
                    <path d="M21 2v8h-8zM1 20v-8h8z" />
                  </Svg>
                </PlainButton>
              </StyleActions>
              <RedFrame />
            </StyleBlock>
            <Tabs $top={8}>
              <Tab $w={63}>Select</Tab>
              <Tab $w={68} $active>Edit</Tab>
              <Tab $w={59}>Mix</Tab>
            </Tabs>
            <EditRow>
              {['edge', 'face', 'back', 'water', 'mark'].map((k) => (
                <EditButton key={k} $active={k === 'mark'} aria-label={k}>
                  <Cube kind={k} />
                </EditButton>
              ))}
              <SectionName>Modeling</SectionName>
            </EditRow>
            <Swatches>
              {swatches.map(([label, color, col]) => (
                <React.Fragment key={label}>
                  <SwatchLabel htmlFor={label} $col={col}>{label}</SwatchLabel>
                  <Swatch id={label} $color={color} $col={col + 1} />
                </React.Fragment>
              ))}
            </Swatches>
            <LineWidthRow>
              <label htmlFor="line-width">Section Line Width</label>
              <LineWidthInput id="line-width" defaultValue="3" />
            </LineWidthRow>
            <CheckGrid>
              {checks.map((c) => (
                <CheckLabel key={c.label}>
                  <CheckBox type="checkbox" defaultChecked={c.on} />
                  <CheckText $focus={c.focus}>{c.label}</CheckText>
                  {c.ring && <Ring />}
                </CheckLabel>
              ))}
            </CheckGrid>
            <Clipped>
              <strong>Match Photo</strong>
            </Clipped>
          </TrayContent>
          <ScrollBar $w={28} $pad={12}>
            <Chevron />
            <ScrollThumb $top={204} />
            <Chevron down />
          </ScrollBar>
        </TrayBody>
      </Tray>
    </Work>

    <StatusBar>
      <StatusIcons>
        <Svg viewBox="0 0 24 24" $w={24}>
          <circle cx="12" cy="12" r="11" fill="none" stroke="#a5a5a5" strokeWidth="1.6" />
          <path d="M12 20c-1-6-5-7-5-11a5 5 0 0 1 10 0c0 4-4 5-5 11z" fill="#a0a0a0" />
        </Svg>
        <Svg viewBox="0 0 24 24" $w={24}>
          <circle cx="12" cy="12" r="11" fill="none" stroke="#111" strokeWidth="2" />
          <circle cx="12" cy="6" r="2" />
          <path d="M8 9h8v5h-2v7h-4v-7H8z" />
        </Svg>
      </StatusIcons>
      <StatusText>Select objects. Shift to extend select. Drag mouse to select multiple.</StatusText>
      <label htmlFor="measure">Measurements</label>
      <MeasureInput id="measure" />
    </StatusBar>
  </Window>
);

export default App;
